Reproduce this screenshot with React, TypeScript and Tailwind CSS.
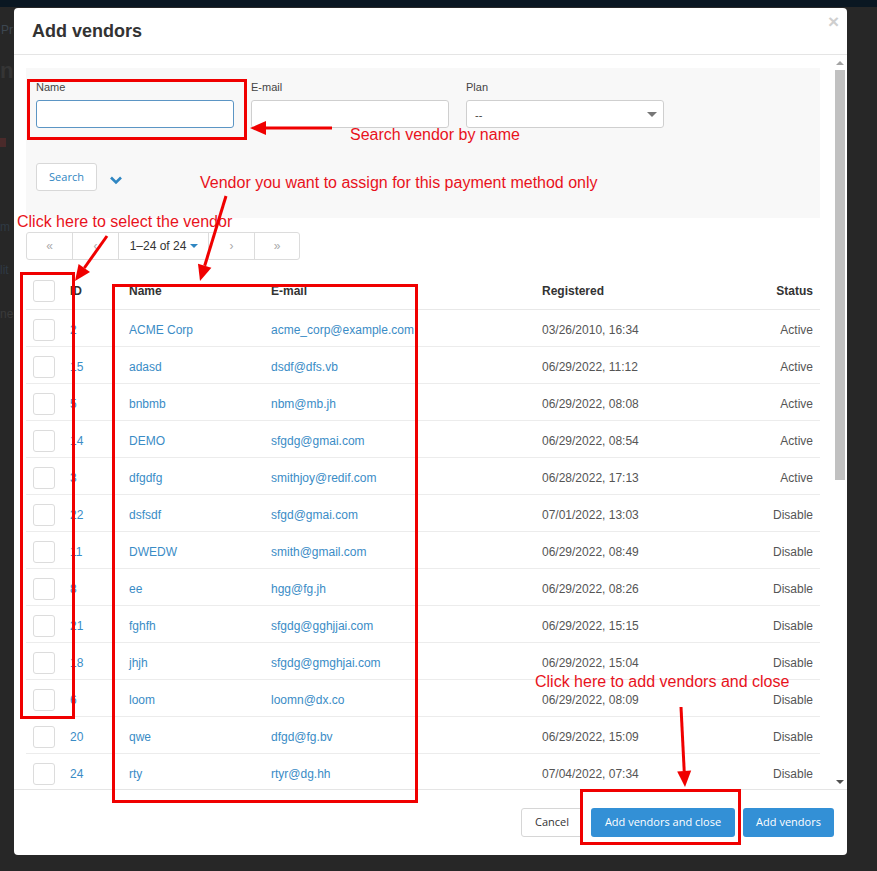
import React from "react";

const rows = [
  ["2", "ACME Corp", "acme_corp@example.com", "03/26/2010, 16:34", "Active"],
  ["15", "adasd", "dsdf@dfs.vb", "06/29/2022, 11:12", "Active"],
  ["5", "bnbmb", "nbm@mb.jh", "06/29/2022, 08:08", "Active"],
  ["14", "DEMO", "sfgdg@gmai.com", "06/29/2022, 08:54", "Active"],
  ["3", "dfgdfg", "smithjoy@redif.com", "06/28/2022, 17:13", "Active"],
  ["22", "dsfsdf", "sfgd@gmai.com", "07/01/2022, 13:03", "Disable"],
  ["11", "DWEDW", "smith@gmail.com", "06/29/2022, 08:49", "Disable"],
  ["8", "ee", "hgg@fg.jh", "06/29/2022, 08:26", "Disable"],
  ["21", "fghfh", "sfgdg@gghjjai.com", "06/29/2022, 15:15", "Disable"],
  ["18", "jhjh", "sfgdg@gmghjai.com", "06/29/2022, 15:04", "Disable"],
  ["6", "loom", "loomn@dx.co", "06/29/2022, 08:09", "Disable"],
  ["20", "qwe", "dfgd@fg.bv", "06/29/2022, 15:09", "Disable"],
  ["24", "rty", "rtyr@dg.hh", "07/04/2022, 07:34", "Disable"],
];

function Checkbox() {
  return <div className="w-[22px] h-[22px] rounded-[3px] border border-[#dcdcdc] bg-white" />;
}

export default function App() {
  return (
    <div
      className="relative w-[877px] h-[871px] overflow-hidden bg-[#272727]"
      style={{ fontFamily: '"Liberation Sans", Arial, sans-serif' }}
    >
      {/* background page (dimmed) */}
      <div className="h-[7px] bg-[#0a1722]" />
      <div className="absolute left-[1px] top-[21px] text-[12px] text-[#3c4650]">Pr</div>
      <div className="absolute left-[0px] top-[54px] text-[22px] font-bold text-[#353535]">ne</div>
      <div className="absolute left-[0px] top-[138px] w-[6px] h-[9px] bg-[#4a2a2a]" />
      <div className="absolute left-[0px] top-[218px] text-[12px] text-[#2f3a44]">m</div>
      <div className="absolute left-[0px] top-[261px] text-[12px] text-[#2f3a44]">lit</div>
      <div className="absolute left-[0px] top-[305px] text-[12px] text-[#3a3a3a]">ne</div>

      {/* modal */}
      <div className="absolute left-[14px] top-[8px] w-[833px] h-[847px] bg-white rounded-[4px] flex flex-col overflow-hidden">
        <div className="relative h-[47px] shrink-0 flex items-center px-[18px] border-b border-[#e5e5e5]">
          <h1 className="text-[18px] font-bold text-[#333]">Add vendors</h1>
          <span className="absolute right-[8px] top-[4px] text-[19px] font-bold text-[#cfcfcf] leading-none">×</span>
        </div>

        <div className="flex-1 flex min-h-0">
          <div className="flex-1 min-w-0 overflow-hidden pl-[12px] pr-[13px] pt-[13px]">
            {/* search panel */}
            <div className="h-[150px] bg-[#f8f8f8] pl-[10px] pt-[12px]">
              <div className="flex gap-[17px]">
                <div className="w-[198px]">
                  <div className="text-[11px] leading-[14px] text-[#444] mb-[6px]">Name</div>
                  <div className="h-[28px] rounded-[3px] border border-[#5b95c4] bg-white" />
                </div>
                <div className="w-[198px]">
                  <div className="text-[11px] leading-[14px] text-[#444] mb-[6px]">E-mail</div>
                  <div className="h-[28px] rounded-[3px] border border-[#cfcfcf] bg-white" />
                </div>
                <div className="w-[198px]">
                  <div className="text-[11px] leading-[14px] text-[#444] mb-[6px]">Plan</div>
                  <div className="h-[28px] rounded-[3px] border border-[#cfcfcf] bg-white flex items-center justify-between pl-[8px] pr-[6px]">
                    <span className="text-[11px] text-[#444] mt-[2px]">--</span>
                    <span className="w-0 h-0 border-l-[5px] border-r-[5px] border-t-[5px] border-l-transparent border-r-transparent border-t-[#777]" />
                  </div>
                </div>
              </div>
              <div className="flex items-center mt-[35px]">
                <div
                  className="h-[28px] w-[61px] rounded-[3px] border border-[#d8d8d8] bg-white flex items-center justify-center text-[11px] text-[#2f86c2]"
                  style={{ fontFamily: '"Open Sans", sans-serif' }}
                >
                  Search
                </div>
                <svg className="ml-[12px] mt-[5px]" width="14" height="10" viewBox="0 0 14 10">
                  <path d="M2 2.5 L7 7.5 L12 2.5" fill="none" stroke="#2f86c2" strokeWidth="2.6" />
                </svg>
              </div>
            </div>

            {/* pagination */}
            <div className="mt-[14px] flex h-[28px] w-[274px] rounded-[3px] border border-[#dcdcdc] text-[12px]">
              <div className="w-[46px] flex items-center justify-center text-[#aaa] border-r border-[#dcdcdc]">«</div>
              <div className="w-[46px] flex items-center justify-center text-[#aaa] border-r border-[#dcdcdc]">‹</div>
              <div className="w-[90px] flex items-center justify-center text-[#333] border-r border-[#dcdcdc] pl-[1px]">
                1–24 of 24
                <span className="ml-[4px] w-0 h-0 border-l-[4px] border-r-[4px] border-t-[4px] border-l-transparent border-r-transparent border-t-[#2f86c2]" />
              </div>
              <div className="w-[46px] flex items-center justify-center text-[#aaa] border-r border-[#dcdcdc]">›</div>
              <div className="flex-1 flex items-center justify-center text-[#aaa]">»</div>
            </div>

            {/* table */}
            <div className="mt-[12px] text-[12px]">
              <div className="flex items-center h-[38px] border-b border-[#e8e8e8] font-bold text-[#333]">
                <div className="w-[37px] pl-[7px]"><Checkbox /></div>
                <div className="w-[59px] pl-[7px]">ID</div>
                <div className="w-[142px] pl-[7px]">Name</div>
                <div className="w-[271px] pl-[7px]">E-mail</div>
                <div className="w-[150px] pl-[7px]">Registered</div>
                <div className="flex-1 text-right pr-[7px]">Status</div>
              </div>
              {rows.map((r) => (
                <div key={r[0]} className="flex items-center h-[37px] pt-[3px] border-b border-[#ececec]">
                  <div className="w-[37px] pl-[7px]"><Checkbox /></div>
                  <div className="w-[59px] pl-[7px] text-[#3a8cc6]">{r[0]}</div>
                  <div className="w-[142px] pl-[7px] text-[#3a8cc6]">{r[1]}</div>
                  <div className="w-[271px] pl-[7px] text-[#3a8cc6]">{r[2]}</div>
                  <div className="w-[150px] pl-[7px] text-[#555]">{r[3]}</div>
                  <div className="flex-1 text-right pr-[7px] text-[#555]">{r[4]}</div>
                </div>
              ))}
            </div>
          </div>

          {/* scrollbar */}
          <div className="w-[14px] shrink-0 flex flex-col items-center bg-white">
            <div className="h-[15px] flex items-center justify-center">
              <span className="w-0 h-0 border-l-[4px] border-r-[4px] border-b-[4px] border-l-transparent border-r-transparent border-b-[#a3a3a3]" />
            </div>
            <div className="w-[10px] h-[410px] bg-[#c1c1c1]" />
            <div className="flex-1" />
            <div className="h-[15px] flex items-center justify-center">
              <span className="w-0 h-0 border-l-[4px] border-r-[4px] border-t-[4px] border-l-transparent border-r-transparent border-t-[#505050]" />
            </div>
          </div>
        </div>

        {/* footer */}
        <div
          className="h-[66px] shrink-0 border-t border-[#e5e5e5] flex items-center justify-end gap-[8px] pr-[13px] text-[11px]"
          style={{ fontFamily: '"Open Sans", sans-serif' }}
        >
          <div className="h-[29px] px-[13px] rounded-[3px] border border-[#d6d6d6] bg-white text-[#333] flex items-center">Cancel</div>
          <div className="h-[29px] w-[144px] rounded-[3px] bg-[#3390d6] text-white flex items-center justify-center">Add vendors and close</div>
          <div className="h-[29px] w-[91px] rounded-[3px] bg-[#3390d6] text-white flex items-center justify-center">Add vendors</div>
        </div>
      </div>

      {/* annotations */}
      <div className="absolute left-[27px] top-[79px] w-[220px] h-[61px] border-[3px] border-[#f00000]" />
      <div className="absolute left-[20px] top-[272px] w-[55px] h-[447px] border-[3px] border-[#f00000]" />
      <div className="absolute left-[112px] top-[284px] w-[306px] h-[519px] border-[3px] border-[#f00000]" />
      <div className="absolute left-[580px] top-[789px] w-[161px] h-[56px] border-[3px] border-[#f00000]" />

      <div className="absolute left-[350px] top-[126px] text-[16px] leading-[18px] text-[#e8121c] whitespace-nowrap">Search vendor by name</div>
      <div className="absolute left-[200px] top-[174px] text-[16px] leading-[18px] text-[#e8121c] whitespace-nowrap">Vendor you want to assign for this payment method only</div>
      <div className="absolute left-[17px] top-[213px] text-[16px] leading-[18px] text-[#e8121c] whitespace-nowrap">Click here to select the vendor</div>
      <div className="absolute left-[535px] top-[673px] text-[16px] leading-[18px] text-[#e8121c] whitespace-nowrap">Click here to add vendors and close</div>

      <svg className="absolute left-0 top-0 pointer-events-none" width="877" height="871" viewBox="0 0 877 871">
        <g stroke="#f00000" strokeWidth="3" fill="none">
          <line x1="332" y1="128" x2="265" y2="128" />
          <line x1="226" y1="196" x2="204.7" y2="265.7" />
          <line x1="107" y1="236" x2="84.3" y2="268" />
          <line x1="681" y1="707" x2="684.2" y2="771" />
        </g>
        <g fill="#f00000">
          <polygon points="250,128 266,121 266,135" />
          <polygon points="200,281 211.4,267.7 198,263.7" />
          <polygon points="75,281 90,272.1 78.6,263.9" />
          <polygon points="685,787 691.2,770.6 677.2,771.4" />
        </g>
      </svg>
    </div>
  );
}
